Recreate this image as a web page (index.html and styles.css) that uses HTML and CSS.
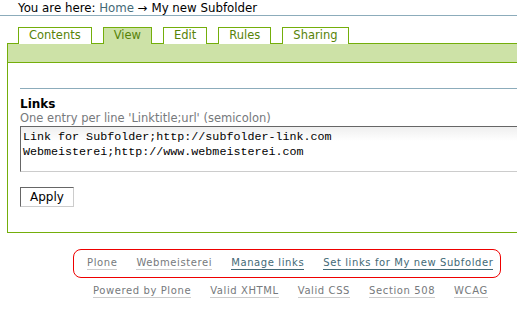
FILE: index.html
```html
<!DOCTYPE html>
<html lang="en">
<head>
    <meta charset="UTF-8">
    <title>My new Subfolder</title>
    <link rel="stylesheet" href="styles.css">
</head>
<body>
    <div class="page">
        <div class="breadcrumbs">
            You are here: <a href="#">Home</a> &rarr; My new Subfolder
        </div>

        <ul class="tabs">
            <li><a href="#">Contents</a></li>
            <li class="selected"><a href="#">View</a></li>
            <li><a href="#">Edit</a></li>
            <li><a href="#">Rules</a></li>
            <li><a href="#">Sharing</a></li>
        </ul>

        <div class="content-box">
            <div class="content-bar"></div>
            <form class="edit-form">
                <div class="field">
                    <label for="links">Links</label>
                    <div class="help">One entry per line 'Linktitle;url' (semicolon)</div>
                    <textarea id="links" rows="3">Link for Subfolder;http://subfolder-link.com
Webmeisterei;http://www.webmeisterei.com</textarea>
                </div>
                <button type="button" class="apply">Apply</button>
            </form>
        </div>

        <div class="footer">
            <div class="site-links">
                <a href="#" class="plain">Plone</a>
                <a href="#" class="plain">Webmeisterei</a>
                <a href="#">Manage links</a>
                <a href="#">Set links for My new Subfolder</a>
            </div>
            <div class="colophon">
                <a href="#">Powered by Plone</a>
                <a href="#">Valid XHTML</a>
                <a href="#">Valid CSS</a>
                <a href="#">Section 508</a>
                <a href="#">WCAG</a>
            </div>
        </div>
    </div>
</body>
</html>
```

FILE: styles.css
```css
* {
    margin: 0;
    padding: 0;
    box-sizing: border-box;
}

html, body {
    overflow: hidden;
}

body {
    font-family: 'DejaVu Sans', Verdana, sans-serif;
    font-size: 11.5px;
    color: #000;
    background: white;
}

a {
    text-decoration: none;
}

.page {
    width: 580px;
}

.breadcrumbs {
    padding: 1px 0 0 18px;
    height: 16px;
    line-height: 14px;
    font-size: 11.8px;
    border-bottom: 1px solid #8cacbb;
    white-space: nowrap;
}

.breadcrumbs a {
    color: #436976;
}

.tabs {
    list-style: none;
    display: flex;
    gap: 11px;
    margin: 11px 0 0 18px;
    position: relative;
    z-index: 1;
}

.tabs li {
    border: 1px solid #74ae0b;
    border-bottom: none;
    background: white;
    height: 17px;
    margin-bottom: -1px;
}

.tabs li a {
    display: block;
    padding: 0 10px;
    line-height: 15px;
    color: #578308;
}

.tabs li.selected {
    background: #cde2a7;
}

.content-box {
    margin-left: 7px;
    border: 1px solid #74ae0b;
    border-right: none;
}

.content-bar {
    height: 19px;
    background: #cde2a7;
    border-bottom: 1px solid #74ae0b;
}

.edit-form {
    padding: 25px 0 25px 12px;
}

.field {
    border-top: 1px solid #8cacbb;
    padding-top: 8px;
}

.field label {
    display: block;
    font-weight: bold;
    font-size: 12px;
    line-height: 14px;
}

.help {
    color: #76797c;
    line-height: 14px;
    white-space: nowrap;
}

.field textarea {
    display: block;
    width: 100%;
    height: 46px;
    margin-top: 1px;
    padding: 3px 2px 0;
    font-family: 'Liberation Mono', 'Courier New', monospace;
    font-size: 11.7px;
    line-height: 15px;
    color: #000;
    border: 1px solid #ccc;
    border-top-color: #666;
    border-left-color: #666;
    background: linear-gradient(#efefef, #fff 14px);
    resize: none;
    overflow: hidden;
}

.apply {
    margin-top: 15px;
    width: 54px;
    height: 20px;
    font-family: 'DejaVu Sans', Verdana, sans-serif;
    font-size: 12px;
    background: white;
    border: 1px solid #ccc;
    border-top-color: #666;
    border-left-color: #666;
}

.footer {
    padding-top: 16px;
    font-size: 10px;
    letter-spacing: 0.6px;
    white-space: nowrap;
}

.footer a {
    color: #76797c;
    border-bottom: 1px solid #ccc;
    line-height: 12px;
}

.site-links {
    display: inline-flex;
    gap: 19px;
    align-items: center;
    margin-left: 73px;
    height: 29px;
    padding: 0 7px 0 13px;
    border: 1px solid #e00;
    border-radius: 8px;
}

.site-links a {
    color: #436976;
    border-bottom-color: #436976;
}

.site-links a.plain {
    color: #76797c;
    border-bottom-color: #ccc;
}

.colophon {
    display: flex;
    gap: 19px;
    margin: 7px 0 0 93px;
}
```
